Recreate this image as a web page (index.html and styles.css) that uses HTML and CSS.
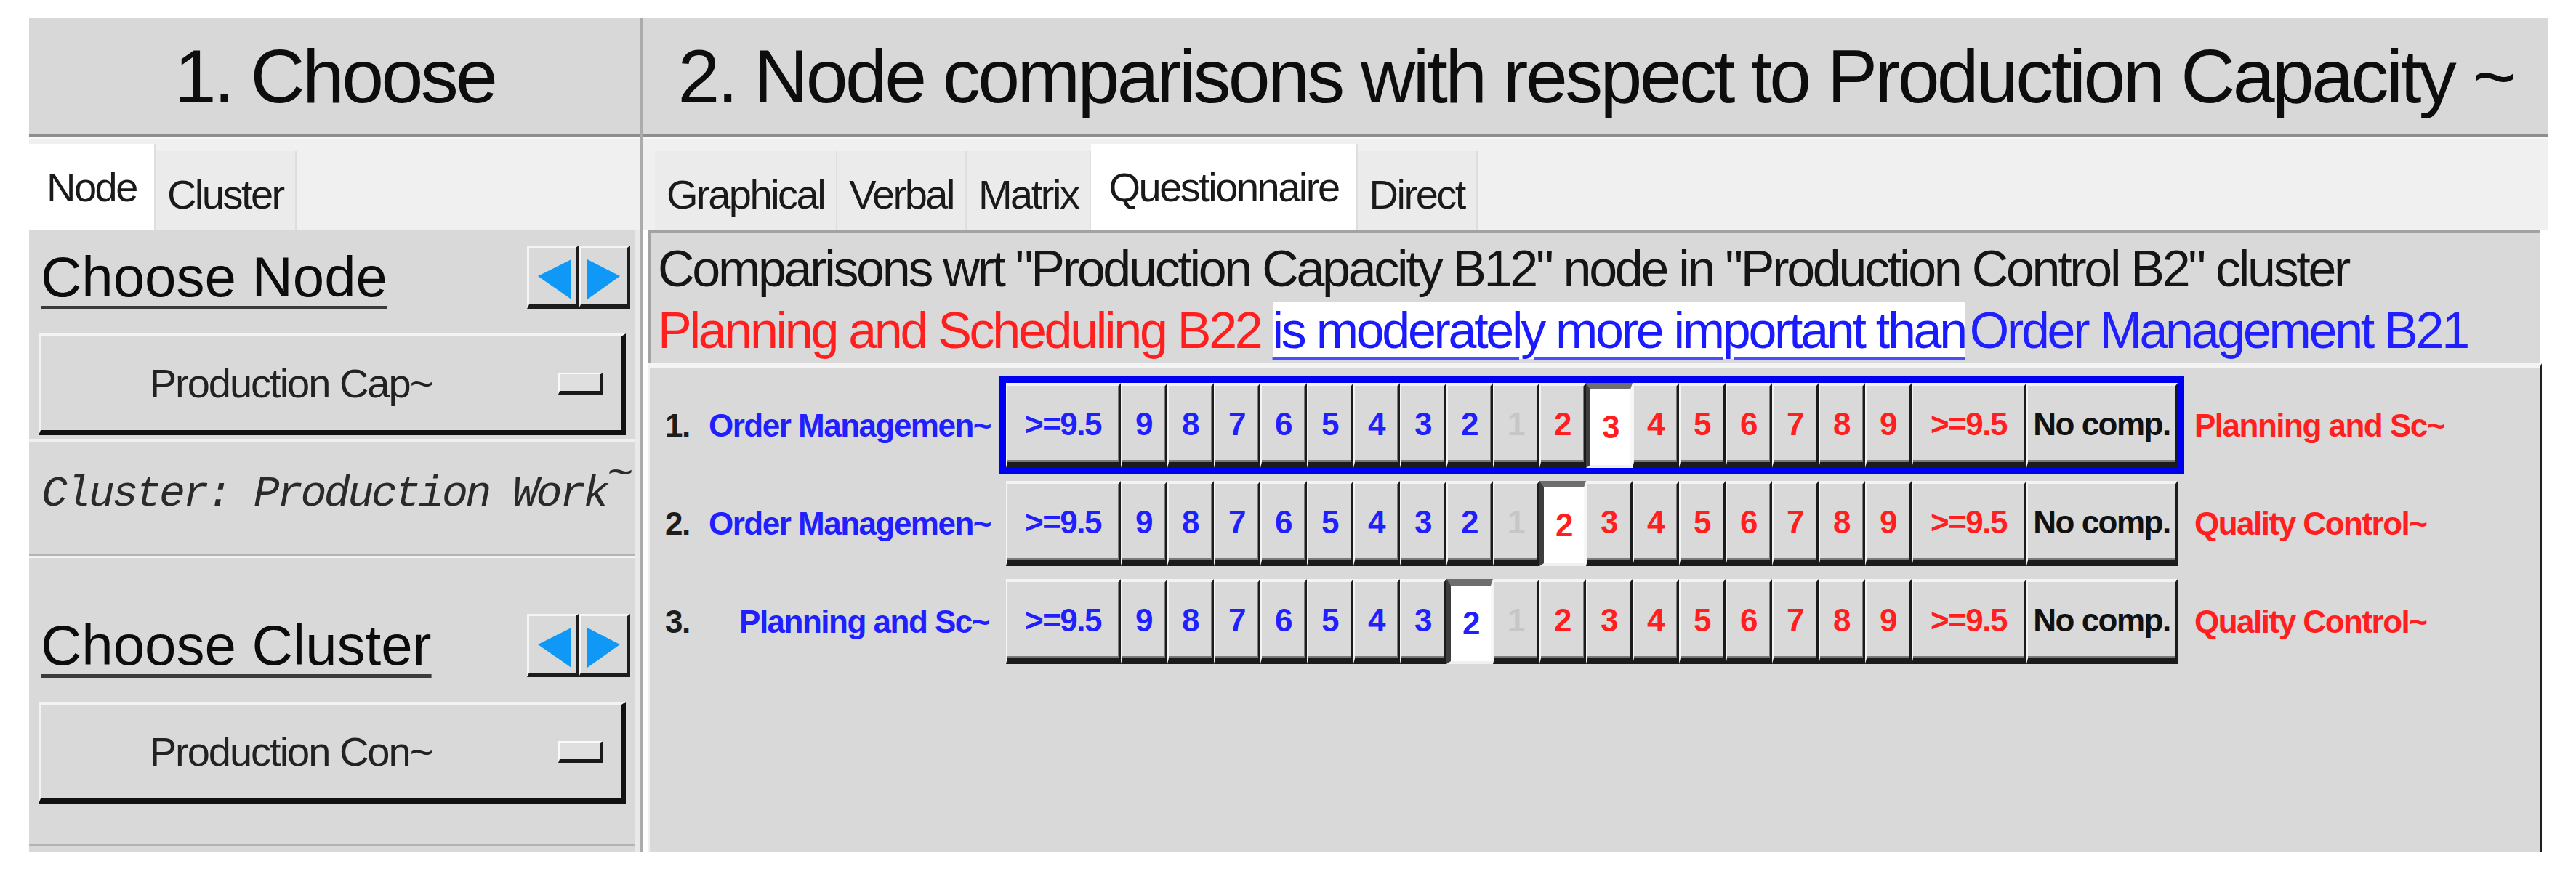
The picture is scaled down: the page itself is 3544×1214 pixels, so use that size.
FILE: index.html
```html
<!DOCTYPE html>
<html lang="en">
<head>
    <meta charset="UTF-8">
    <title>Node comparisons</title>
    <link rel="stylesheet" href="styles.css">
</head>
<body>
    <div class="app">
        <div class="choose-pane">
            <div class="pane-title">1. Choose</div>
            <div class="tabs">
                <div class="tab active">Node</div>
                <div class="tab">Cluster</div>
            </div>
            <div class="choose-body">
                <div class="chooser">
                    <div class="chooser-head">
                        <span class="chooser-label">Choose Node</span>
                        <div class="arrows">
                            <div class="arrow"><svg width="64" height="78" viewBox="0 0 64 78"><polygon points="12,39 58,16 58,71" fill="#0f98f5"/></svg></div>
                            <div class="arrow"><svg width="64" height="78" viewBox="0 0 64 78"><polygon points="9,16 9,71 54,39" fill="#0f98f5"/></svg></div>
                        </div>
                    </div>
                    <div class="dropdown">
                        <span class="dropdown-text">Production Cap~</span>
                        <span class="dropdown-knob"></span>
                    </div>
                    <div class="cluster-note">Cluster: Production Work<span class="tilde">~</span></div>
                </div>
                <div class="chooser">
                    <div class="chooser-head">
                        <span class="chooser-label">Choose Cluster</span>
                        <div class="arrows">
                            <div class="arrow"><svg width="64" height="78" viewBox="0 0 64 78"><polygon points="12,39 58,16 58,71" fill="#0f98f5"/></svg></div>
                            <div class="arrow"><svg width="64" height="78" viewBox="0 0 64 78"><polygon points="9,16 9,71 54,39" fill="#0f98f5"/></svg></div>
                        </div>
                    </div>
                    <div class="dropdown">
                        <span class="dropdown-text">Production Con~</span>
                        <span class="dropdown-knob"></span>
                    </div>
                </div>
            </div>
        </div>

        <div class="compare-pane">
            <div class="pane-title">2. Node comparisons with respect to Production Capacity ~</div>
            <div class="tabs">
                <div class="tab">Graphical</div>
                <div class="tab">Verbal</div>
                <div class="tab">Matrix</div>
                <div class="tab active">Questionnaire</div>
                <div class="tab">Direct</div>
            </div>
            <div class="criterion">
                <div>Comparisons wrt "Production Capacity B12" node in "Production Control B2" cluster</div>
                <div><span class="red">Planning and Scheduling B22</span> <span class="verdict">is moderately more important than</span><span class="blue after-verdict">Order Management B21</span></div>
            </div>
            <div class="compare-area">
                <!-- row 1 -->
                <div class="pair">
                    <span class="pair-no">1.</span>
                    <span class="pair-left">Order Managemen~</span>
                    <div class="scale focus">
                        <div class="opt wide blue">&gt;=9.5</div>
                        <div class="opt blue">9</div>
                        <div class="opt blue">8</div>
                        <div class="opt blue">7</div>
                        <div class="opt blue">6</div>
                        <div class="opt blue">5</div>
                        <div class="opt blue">4</div>
                        <div class="opt blue">3</div>
                        <div class="opt blue">2</div>
                        <div class="opt grey">1</div>
                        <div class="opt red">2</div>
                        <div class="opt red on">3</div>
                        <div class="opt red">4</div>
                        <div class="opt red">5</div>
                        <div class="opt red">6</div>
                        <div class="opt red">7</div>
                        <div class="opt red">8</div>
                        <div class="opt red">9</div>
                        <div class="opt wide red">&gt;=9.5</div>
                        <div class="opt none">No comp.</div>
                    </div>
                    <span class="pair-right">Planning and Sc~</span>
                </div>
                <!-- row 2 -->
                <div class="pair">
                    <span class="pair-no">2.</span>
                    <span class="pair-left">Order Managemen~</span>
                    <div class="scale">
                        <div class="opt wide blue">&gt;=9.5</div>
                        <div class="opt blue">9</div>
                        <div class="opt blue">8</div>
                        <div class="opt blue">7</div>
                        <div class="opt blue">6</div>
                        <div class="opt blue">5</div>
                        <div class="opt blue">4</div>
                        <div class="opt blue">3</div>
                        <div class="opt blue">2</div>
                        <div class="opt grey">1</div>
                        <div class="opt red on">2</div>
                        <div class="opt red">3</div>
                        <div class="opt red">4</div>
                        <div class="opt red">5</div>
                        <div class="opt red">6</div>
                        <div class="opt red">7</div>
                        <div class="opt red">8</div>
                        <div class="opt red">9</div>
                        <div class="opt wide red">&gt;=9.5</div>
                        <div class="opt none">No comp.</div>
                    </div>
                    <span class="pair-right">Quality Control~</span>
                </div>
                <!-- row 3 -->
                <div class="pair">
                    <span class="pair-no">3.</span>
                    <span class="pair-left">Planning and Sc~</span>
                    <div class="scale">
                        <div class="opt wide blue">&gt;=9.5</div>
                        <div class="opt blue">9</div>
                        <div class="opt blue">8</div>
                        <div class="opt blue">7</div>
                        <div class="opt blue">6</div>
                        <div class="opt blue">5</div>
                        <div class="opt blue">4</div>
                        <div class="opt blue">3</div>
                        <div class="opt blue on">2</div>
                        <div class="opt grey">1</div>
                        <div class="opt red">2</div>
                        <div class="opt red">3</div>
                        <div class="opt red">4</div>
                        <div class="opt red">5</div>
                        <div class="opt red">6</div>
                        <div class="opt red">7</div>
                        <div class="opt red">8</div>
                        <div class="opt red">9</div>
                        <div class="opt wide red">&gt;=9.5</div>
                        <div class="opt none">No comp.</div>
                    </div>
                    <span class="pair-right">Quality Control~</span>
                </div>
            </div>
        </div>
    </div>
</body>
</html>
```

FILE: styles.css
```css
body {
    margin: 0;
    background: #fff;
    font-family: "Liberation Sans", Arial, sans-serif;
    color: #111;
}
.app {
    display: flex;
    width: 3466px;
    height: 1148px;
    margin: 25px 0 0 40px;
}
.choose-pane {
    width: 841px;
    display: flex;
    flex-direction: column;
}
.compare-pane {
    flex: 1;
    display: flex;
    flex-direction: column;
    border-left: 4px solid #ababab;
}
.pane-title {
    height: 160px;
    line-height: 160px;
    background: #d8d8d8;
    border-bottom: 4px solid #8e8e8e;
    text-align: center;
    font-size: 104px;
    letter-spacing: -3.6px;
    color: #0d0d0d;
    white-space: nowrap;
}

/* tab strips */
.tabs {
    display: flex;
    align-items: flex-end;
    height: 124px;
    background: #eff0ef;
    border-top: 3px solid #f8f8f8;
}
.compare-pane .tabs {
    padding-left: 16px;
}
.tab {
    height: 108px;
    line-height: 119px;
    padding: 0 16px;
    background: #ebebeb;
    border-right: 2px solid #dedede;
    font-size: 56px;
    letter-spacing: -2.5px;
    color: #1a1a1a;
    white-space: nowrap;
}
.tab.active {
    height: 118px;
    padding: 0 24px;
    background: #fff;
}

/* left side: node / cluster choosers */
.choose-body {
    flex: 1;
    background: #d9d9d9;
    border-right: 8px solid #e9e9e9;
}
.chooser {
    padding: 22px 12px 0 13px;
    border-bottom: 3px solid #b3b3b3;
}
.chooser + .chooser {
    padding-top: 77px;
    padding-bottom: 56px;
    border-top: 3px solid #f3f3f3;
}
.chooser-head {
    display: flex;
    align-items: center;
    justify-content: space-between;
    padding-left: 3px;
    margin-right: -6px;
}
.chooser-label {
    font-size: 78px;
    line-height: 87px;
    color: #0c0c0c;
    text-decoration: underline;
    text-decoration-thickness: 5px;
    text-underline-offset: 13px;
    text-decoration-color: #3b3b3b;
}
.arrows {
    display: flex;
}
.arrow {
    width: 71px;
    height: 87px;
    box-sizing: border-box;
    background: #d9d9d9;
    border-style: solid;
    border-width: 3px 4px 6px 3px;
    border-color: #f4f4f4 #1c1c1c #1c1c1c #f4f4f4;
}
.arrow svg {
    display: block;
}
.dropdown {
    display: flex;
    align-items: center;
    height: 140px;
    margin-top: 34px;
    box-sizing: border-box;
    background: #d9d9d9;
    border-style: solid;
    border-width: 4px 6px 7px 3px;
    border-color: #f3f3f3 #111 #111 #f3f3f3;
}
.dropdown-text {
    flex: 1;
    padding-right: 24px;
    text-align: center;
    font-size: 56px;
    letter-spacing: -2px;
    color: #222;
}
.dropdown-knob {
    width: 62px;
    height: 30px;
    margin-right: 25px;
    box-sizing: border-box;
    background: #dfdfdf;
    border-style: solid;
    border-width: 2px 4px 5px 2px;
    border-color: #fafafa #1a1a1a #1a1a1a #fafafa;
}
.cluster-note {
    margin: 5px -12px 0 -13px;
    padding: 17px 0 27px 17px;
    border-top: 4px solid #f0f0f0;
    font-family: "Liberation Mono", "Courier New", monospace;
    font-style: italic;
    font-size: 60px;
    letter-spacing: -3.6px;
    line-height: 110px;
    color: #2a2a2a;
    white-space: nowrap;
}
.tilde {
    position: relative;
    top: -0.45em;
}

/* right side: criterion text and questionnaire */
.criterion {
    margin: 0 12px 0 6px;
    padding: 7px 0 2px 9px;
    background: #d9d9d9;
    border-top: 5px solid #a3a3a3;
    border-left: 5px solid #a3a3a3;
    font-size: 70px;
    letter-spacing: -3.3px;
    line-height: 85px;
    color: #151515;
    white-space: nowrap;
}
.red {
    color: #ff1f1f;
}
.blue {
    color: #2020ff;
}
.grey {
    color: #c6c6c6;
}
.verdict {
    background: #fff;
    color: #1a1aff;
    text-decoration: underline;
    text-decoration-thickness: 5px;
    text-underline-offset: 12px;
    text-decoration-color: #4a4aff;
}
.after-verdict {
    margin-left: 6px;
}
.compare-area {
    flex: 1;
    margin: 0 9px 0 6px;
    padding-top: 12px;
    background: #d9d9d9;
    border-top: 6px solid #f4f4f4;
    border-left: 3px solid #f0f0f0;
    border-right: 3px solid #1e1e1e;
}
.pair {
    display: flex;
    align-items: center;
    height: 135px;
    font-weight: bold;
    letter-spacing: -1.5px;
    white-space: nowrap;
}
.pair-no {
    width: 60px;
    margin-left: 21px;
    font-size: 44px;
    color: #1d1d1d;
}
.pair-left {
    width: 386px;
    text-align: right;
    font-size: 44px;
    color: #2020ff;
}
.pair-right {
    margin-left: 14px;
    font-size: 44px;
    color: #ff1f1f;
}
.scale {
    display: flex;
    margin-left: 14px;
    border: 9px solid transparent;
}
.scale.focus {
    border-color: #0000f0;
}
.opt {
    display: flex;
    align-items: center;
    justify-content: center;
    width: 64px;
    height: 117px;
    box-sizing: border-box;
    background: #d9d9d9;
    border-style: solid;
    border-width: 4px 3px 8px 2px;
    border-color: #f4f4f4 #1b1b1b #1b1b1b #f4f4f4;
    box-shadow: inset -1px -3px 0 #7a7a7a;
    font-size: 44px;
}
.opt.wide {
    width: 158px;
}
.opt.none {
    width: 208px;
    color: #111;
}
.opt.on {
    background: #fff;
    border-width: 9px 3px 4px 6px;
    border-color: #6e6e6e #f7f7f7 #f0f0f0 #3d3d3d;
    box-shadow: none;
}
```
